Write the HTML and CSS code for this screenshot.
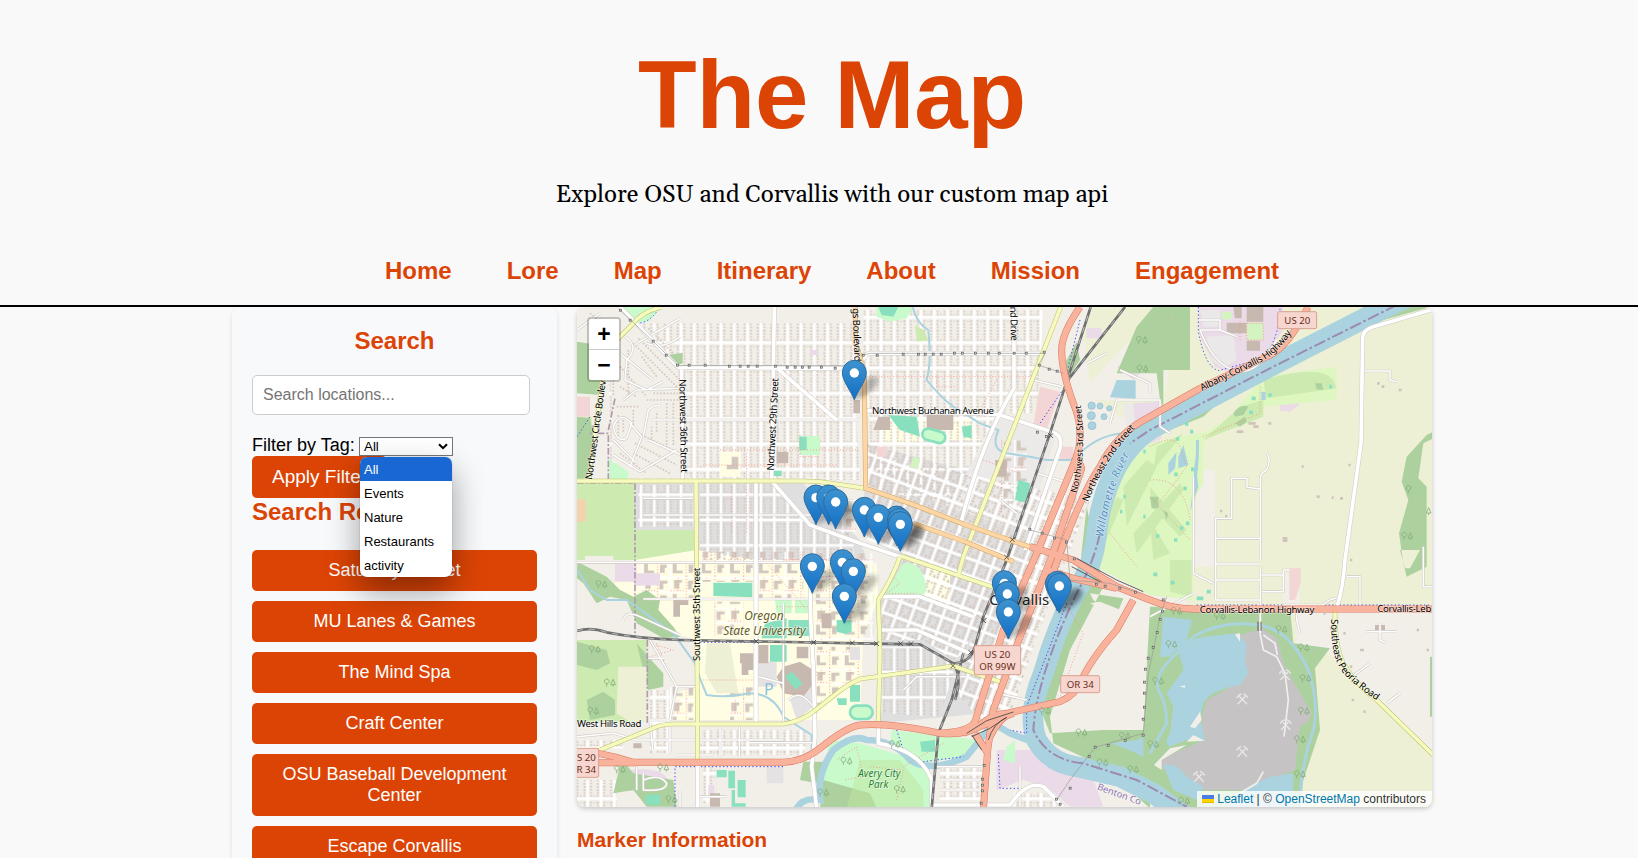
FILE: index.html
```html
<!DOCTYPE html>
<html lang="en">
<head>
<meta charset="utf-8">
<title>The Map</title>
<link rel="stylesheet" href="styles.css">
</head>
<body>
<div class="page">
<header class="header">
  <h1 class="title">The Map</h1>
  <p class="tagline">Explore OSU and Corvallis with our custom map api</p>
  <nav class="nav"><a>Home</a><a>Lore</a><a>Map</a><a>Itinerary</a><a>About</a><a>Mission</a><a>Engagement</a></nav>
</header>
<main class="container">
  <aside class="sidebar">
    <h2 class="side-title">Search</h2>
    <input class="search" type="text" placeholder="Search locations...">
    <div class="filter">
      <label>Filter by Tag:</label>
      <div class="select"><span>All</span>
        <svg class="chevron" viewBox="0 0 10 7"><path d="M1 1.2 5 5.2 9 1.2"/></svg>
        <ul class="options"><li class="selected">All</li><li>Events</li><li>Nature</li><li>Restaurants</li><li>activity</li></ul>
      </div>
    </div>
    <button class="apply">Apply Filter</button>
    <h2 class="results-title">Search Results</h2>
    <div class="results">
      <button>Saturday Market</button><button>MU Lanes &amp; Games</button><button>The Mind Spa</button><button>Craft Center</button><button>OSU Baseball Development Center</button><button>Escape Corvallis</button>
    </div>
  </aside>
  <section class="content">
    <div class="map">
      <svg class="tiles" viewBox="21 21 2565 1500" preserveAspectRatio="none">
        <defs>
          <pattern id="res" width="40" height="76" patternUnits="userSpaceOnUse" patternTransform="translate(13 52)">
            <path class="bld" d="M7 9h6v5H7zM7 18h5v6H7zM8 28h5v5H8zM7 37h6v6H7zM8 47h5v5H8zM7 56h6v5H7zM8 65h5v5H8zM27 9h6v6h-6zM28 19h5v5h-5zM27 29h6v5h-6zM28 38h5v6h-5zM27 48h6v5h-6zM28 57h5v5h-5zM27 66h6v4h-6zM18 10h4v4h-4zM18 66h4v4h-4z"/>
            <path class="st" d="M0 0V76M0 0H40M0 76H40M40 0V76"/>
          </pattern>
          <pattern id="grid" width="44" height="48" patternUnits="userSpaceOnUse" patternTransform="translate(885 560) rotate(20)">
            <path class="bld" d="M7 7h9v6H7zM7 16h7v5H7zM7 24h9v5H7zM7 32h6v8H7zM20 8h6v5h-6zM29 7h8v6h-8zM31 16h6v7h-6zM29 26h8v5h-8zM31 34h6v7h-6zM20 34h7v7h-7z"/>
            <path class="st" d="M0 0V48M44 0V48M0 0H44M0 48H44"/>
          </pattern>
          <pattern id="campus" width="86" height="92" patternUnits="userSpaceOnUse">
            <path class="bld" d="M10 14h24v9H22v17H10zM54 12h24v8h-8v18H54zM12 58h20v10h-6v14H12zM50 54h12v22h18v8H50z"/>
            <path class="svc" d="M0 5H86M44 5V92M5 48H86"/><path class="foot" d="M5 0V92M44 44H86M66 5V48"/>
          </pattern>
          <marker id="pt" markerUnits="userSpaceOnUse" markerWidth="12" markerHeight="12" refX="6" refY="6"><rect x="2.5" y="2.5" width="6" height="6" fill="#ddd" stroke="#555" stroke-width="2"/></marker>
          <g id="tree"><path d="M0 0v-9a7 7 0 1 1 1 0M19 0v-6h-7l7-16 7 16h-7"/></g>
          <g id="picks"><path d="M-14 15 9-9M14 15-9-9M-17-4Q-12-14-3-16M17-4Q12-14 3-16"/></g>
          <linearGradient id="pinfill" x1="0" y1="0" x2="0" y2="1"><stop offset="0" stop-color="#3e93cf"/><stop offset="1" stop-color="#126fc6"/></linearGradient>
          <filter id="soft" x="-50%" y="-50%" width="200%" height="200%"><feGaussianBlur stdDeviation="7"/></filter>
          <g id="pin">
            <path class="pin-shadow" d="M0 0C0-20 20-65 50-70S75-50 55-30 20-8 0 0"/>
            <path class="pin-body" d="M0 0C-9-26-36-57-36-82A36 37 0 0 1 36-82C36-57 9-26 0 0Z"/><circle cx="0" cy="-81" r="14" fill="#fff"/>
          </g>
          <g id="trunk">
            <path d="M85 1360Q140 1370 190 1387L640 1387Q700 1385 750 1345Q830 1280 870 1275Q960 1268 1110 1300Q1190 1308 1230 1275T1310 1240L1470 1205Q1515 1185 1530 1150Q1560 1080 1640 990L1690 900"/>
            <path d="M85 1388H200M1530 21Q1475 100 1475 150Q1475 215 1510 310Q1545 390 1520 470L1400 760L1300 990L1215 1265Q1200 1295 1110 1300"/>
            <path d="M1521 470L1535 505L1445 770L1350 1010L1270 1230L1253 1350L1240 1530M1520 460L1530 530"/>
            <path d="M2214 21Q2150 150 2090 170L1890 265L1740 350Q1640 400 1590 500Q1540 570 1470 760L1440 840"/>
            <path d="M1380 740L1510 780L1640 860L1740 900Q1800 925 1870 927H2590M1430 810L1510 835L1640 865M1215 1300L1250 1355M1180 1300L1330 1240M1260 1310Q1290 1250 1330 1235"/>
          </g>
          <g id="orange"><path d="M856 21V130Q880 190 883 240L887 565L1020 610L1180 672L1400 748M1030 670L1180 723L1330 785"/></g>
          <g id="yellow">
            <path d="M21 543H700Q750 543 800 552L890 566M378 545L383 1380M1472 21L1180 770L1165 825M275 21Q215 35 185 75L110 150Q85 330 55 545"/>
            <path d="M85 1352L255 1282Q280 1272 310 1272H640Q690 1265 730 1235L800 1180Q830 1155 870 1137L1150 1098L1290 1145M990 770Q970 830 925 900L930 1060L925 1265M990 767L1270 862M2295 932Q2294 1040 2320 1090Q2350 1145 2420 1200L2590 1365"/>
          </g>
          <g id="major">
            <path d="M140 10L325 202L870 206M335 200L338 535M613 21L605 543L720 675L870 730L990 770M558 545V1265M1332 21V265Q1230 430 1165 700M870 195Q885 160 900 160H1425M885 332L1230 340L1290 345L1445 395Q1480 405 1470 445L1365 750M622 205L800 360M725 780Q715 890 730 1100L735 1310L725 1400L740 1525M383 1390V1525M925 1280V1330Q1050 1350 1085 1440V1525M930 890H1050L1210 950M930 990H1040L1200 1060"/>
            <path d="M2582 30L2410 80Q2380 90 2378 110L2373 430L2325 780Q2320 860 2300 925M1090 1515H1320Q1370 1440 1420 1460L1480 1520"/>
          </g>
          <g id="minor">
            <path d="M2071 780V535Q2070 520 2090 510Q2105 480 2090 460M2070 567L2031 562V535H1985V655H1937V900M1937 715H2070M1937 792H2070M1937 840H2070M1937 900H2070M2378 213H2460V240L2480 245M2071 800V1000M2075 825H2140V810H2160M2075 875H2140V810M2140 915H2260Q2280 895 2300 895M2330 830H2370V915M2180 915V960L2190 1000M2390 995H2480M2430 970V1020L2450 1030M2560 740V860H2590M2352 1125L2400 1090M2450 1210L2490 1180"/>
            <path d="M1885 60H1950V90L2000 110M1950 90H1890Q1930 190 1990 210T2100 150L2120 120M1740 950L1870 880M1870 530V820L1930 850M220 897H870M640 910V1270M21 787H730M240 1020L320 1160L380 1160M240 1260H300L320 1160M235 1075H285M21 1310L130 1300L200 1320H640M240 1270L250 1360M300 1270V1360M450 1275V1370M508 1275V1370M320 1365H430M540 1328H735M200 1390V1470M390 1490H470M330 1520V1470M160 960Q170 930 210 950L330 1005M220 1440Q270 1420 290 1450Q290 1475 220 1470V1420"/>
            <path d="M165 110Q210 140 170 180L165 240L230 270L280 245M130 380Q150 330 185 370L170 415Q140 430 130 380M220 410L235 330Q260 310 270 320M130 465L210 515L320 450M200 490L130 420M235 420L335 465M200 130L330 55M230 130Q280 150 330 110M60 50L110 90M21 90L90 40M160 300L200 270L330 265M150 160L250 240M180 500L215 410L180 370M245 360H870M220 595H370M220 645H870"/>
            <path d="M1550 190L1610 160M1620 370L1640 300L1770 300V380L1800 400M1400 520L1500 550M1290 600L1340 640M1390 240L1475 260M1650 210L1740 250 1740 280M640 1150L565 1130M655 1200Q700 1160 740 1240M1100 1400H1240M1110 1440H1230M1110 1470H1230M1350 1520V1400M1000 1170L1040 1130L1190 1130M1280 1180L1370 1200"/>
          </g>
          <g id="rail"><path d="M21 993Q60 980 110 997Q200 1015 330 1020L870 1030L1050 1033Q1090 1055 1150 1090Q1200 1090 1215 1040L1240 950L1310 780L1440 400L1490 245L1562 21M1490 245L1665 21M1180 1060L1145 1200L1105 1300L1085 1525M1145 1090Q1180 1120 1155 1200"/></g>
        </defs>
        <rect width="2600" height="1530" fill="#f2efe9"/>
        <!-- land use -->
        <path fill="#e0dfdf" d="M195 550H372V690H195zM385 550H700L870 720L890 780H385zM885 430L1380 560L1400 760L1240 1240L930 1270L925 900L985 770L880 700z"/>
        <path fill="#eef0d5" d="M1560 21H2590V1525H2200L1850 925V500L1740 400L1600 320L1500 240z"/>
        <path fill="#eceae8" d="M1290 345L1460 400L1370 700L1130 620zM1660 310H1770V440L1690 550z"/>
        <path fill="#f2efe9" d="M1540 90L1490 240L1560 300L1780 300L1800 200L1700 100L1560 250zM1885 510H1935V800H1870zM1560 810L1690 870L1660 960L1560 1080L1450 1240L1500 1290L1700 1260L1730 900zM2180 915H2590V1360L2330 1120L2270 1060L2180 1030zM2140 805L2190 880V920H2140z"/>
        <path fill="#cdebb0" d="M21 550H193L197 690H372V780H21zM21 1020H230V1265H21zM21 350H65V545H21z"/>
        <path fill="#f2efe9" d="M45 768H130V782H45z"/><path fill="#f2d3ae" d="M21 598H47V665H21z"/>
        <path fill="#fffee5" d="M135 790L380 750L560 780H870L920 790L925 900L880 1000L870 1260L640 1260H310L310 1180L385 1160L380 1020L310 1000L190 890L135 860zM930 350H1200L1230 420H1100L940 435zM1070 800L1140 825V920L1060 890z"/>
        <path fill="url(#res)" d="M115 70H860V370L870 540H120zM880 30H1420L1400 340H880zM900 340H1280L1140 620L890 560zM390 550H620L720 680L850 730V780H390zM245 555H370V680H205V555z"/>
        <path fill="#f2efe9" d="M125 300H335V535H180L125 475zM115 70H190L325 205V300H125z"/>
        <path class="specks" d="M190 130L325 265M205 115L330 240M235 85L320 170M60 40L110 80M150 200L230 290M175 150V300M190 330V380M145 345V410M160 350V400M205 400L330 460M195 430L320 495M190 460L300 520M150 460L230 520M260 340V400M290 310V440M310 310V440M245 380V420M230 300H330M140 320H210M130 150V290M150 260L200 290M215 170L260 230M250 280H325"/>
        <path fill="#fffee5" d="M450 455H512V530H450z"/><path fill="#d3c8c0" d="M485 470H505V508H470V495H485z"/>
        <path fill="url(#grid)" d="M890 430L1180 520L1560 600L1400 1010L1330 1220L1240 1270L1160 1180L1220 950L990 870L1000 760L890 720z"/>
        <path fill="url(#grid)" d="M935 900L1060 885L1240 930L1180 1060L1150 1080L1060 1020H935z"/>
        <path fill="url(#res)" d="M935 1040H1060L1140 1090L1150 1120L1110 1250L935 1240z"/>
        <path fill="url(#res)" d="M240 1170H300V1360H240zM390 1290H720L700 1365H390zM400 1395H440V1510H400zM1110 1400H1250V1500H1110zM1330 1480H1460V1520H1330zM21 1320H160V1345H21zM21 1440H140V1520H21z"/>
        <path fill="url(#campus)" d="M395 755H550V845H395zM565 755H700V900H565zM735 760H910V1020H735zM300 1160H370V1260H300zM480 1160H550V1260H480zM740 1040H870V1130L740 1230zM210 790H370V900H210zM800 600H860V720L800 690zM1290 420H1370V560L1290 640zM430 905H520V1010H430z"/>
        <path fill="#e4e2e2" d="M565 1085H620V1160H565zM660 1200L730 1150V1220L680 1260zM840 1040H870V1080H840zM590 1400H640V1450H590z"/>
        <path fill="#ebdbe8" d="M135 790H200V820H270V856L195 857L190 845H135zM155 1415Q280 1390 300 1450Q300 1490 260 1480L155 1470zM1690 310L1775 305V415L1700 450zM1640 200L1740 150V190L1690 240zM1550 84H1595V115H1550zM2130 305L2187 300V315L2160 335L2130 332zM1885 21H2140V90L2100 150L1980 220L1935 200L1890 110zM1380 1350L1560 1410L1600 1520H1500L1430 1460L1360 1440L1280 1470V1350zM415 1455H433V1485H415zM720 150H745V165H720z"/>
        <path fill="#eae8e9" d="M1892 30H1950V80H1900zM1910 110L1990 105L2000 180L1960 205L1930 185z"/>
        <path fill="#c8facc" d="M150 21H275L235 65L190 70L175 55zM685 408H750V465H690zM918 21H1030L1010 55L960 65L920 50zM115 475L175 515V540H120zM1000 790Q1060 780 1070 870L1060 885H945zM965 1290L1230 1320L1180 1370L1050 1390L960 1340zM780 1320L870 1330L1040 1380L1090 1450V1525H800L750 1460zM1310 1340L1335 1320V1390L1300 1380zM615 900H665V940H620zM675 900H720V940H675z"/>
        <path fill="#add19e" d="M21 125L85 135L95 285L21 280zM295 165L338 158V190L320 198zM21 350L60 355L70 400L50 535H21zM22 785L110 830L150 870L190 890L230 870L270 900L265 930L310 980L330 1010L280 1015L200 970L170 900L120 890L80 910L40 850L21 835zM21 1025L110 1050L120 1090L80 1110L21 1095zM200 1030L235 1070L280 1120V1160L235 1170L220 1110zM50 1200L100 1175L135 1200V1245L60 1260zM160 1170H205V1245L165 1240zM150 1395L170 1395L190 1420L310 1440L320 1520H230L190 1470L130 1480zM700 1385H760V1440L740 1450L690 1440zM760 1440L900 1480L920 1525H750zM1485 190L1520 125L1530 180L1490 240zM1700 80L1750 21H1860V210H1780V320L1770 300L1760 220L1640 220z"/>
        <path fill="#add19e" d="M1750 21H1780L1782 210H1745zM2020 240L2110 195L2260 110L2580 21H2480L2230 140L1980 260L1800 340V390L1900 350zM2590 395L2570 405L2510 470L2495 545L2515 600L2487 700L2500 790L2510 830L2570 800V560L2545 535L2560 430L2590 415zM1550 620L1530 800L1480 960L1400 1200L1440 1300L1600 1290L1720 1290L1740 920H2160L2170 1030L2280 1045L2235 1105L2250 1290L2200 1440L2190 1525H1740L1600 1400L1450 1330L1440 1250L1500 1050L1600 860zM1560 880L1660 895L1640 945L1570 900zM2580 1070h8v180h-8zM2490 750H2550L2520 805H2505z"/>
        <path fill="#f2efe9" d="M1560 910L1590 905L1690 945L1660 960L1630 1020L1590 1060L1545 1170L1450 1210L1445 1260L1600 1290L1710 1290L1725 1200L1735 910L1700 880L1660 960z"/>
        <path fill="#def6c0" d="M1740 430L1910 395L1980 350L2080 230L2300 200V300L2080 320L1960 360L1900 430L1900 550L1870 600L1868 900L1740 885L1540 780L1560 640L1640 520z"/>
        <path fill="#cdebb0" d="M2080 240Q2250 190 2290 240L2300 265L2090 295zM1900 420L2010 320L2080 300V350zM1660 560L1730 480L1760 500L1670 680zM1690 700L1830 550L1840 570L1700 760zM1740 560L1850 690L1830 710L1745 620zM1740 660L1800 760L1750 780zM1800 780H1865V890L1800 875zM1600 660L1640 590L1660 600L1580 790zM1760 440L1840 400L1750 510zM1035 75L1060 90L1075 120L1040 125z"/>
        <path fill="#add19e" d="M1990 340Q2010 310 2035 320L2020 345 1995 350zM1995 370L2025 350 2030 365 2010 380zM1740 590H1765V625H1745zM2235 250H2255L2260 270 2240 268zM1780 630L1795 640 1790 660z"/>
        <path fill="#bfe5a0" d="M870 1380L990 1380L1060 1470V1525H830z" opacity=".5"/>
        <path fill="#eef0d5" d="M2240 1105L2280 1060L2330 1120L2590 1370V1525H2200L2250 1300V1160zM145 1100H230V1265H180L140 1240zM410 1030H480L505 1180H440L405 1120z"/>
        <path fill="#c8b9b0" d="M925 350H960V390H910zM1070 345H1150V390H1070zM1970 68H2030V100H1970zM2030 21H2080V65H2030zM1990 21H2015V55H1995zM2030 122H2070V152H2030zM640 1100L690 1085L730 1110V1150L700 1190L640 1180L620 1130zM510 1060H550V1110H535V1125H515V1090H510zM2415 975H2445V990H2415zM565 1035H595V1090H565zM680 1040H715V1075H680zM620 455H655V490H620zM310 900H355V915H330V950H310zM1275 480H1310V530H1280zM850 300H870V340H850zM755 940H785V985H755zM190 1330H215V1345H190zM420 1480H450V1520H420z"/>
        <path fill="#88e0be" d="M430 848H547V892L430 888zM585 970L650 955V1015H575zM655 960H722V1008H655zM600 1035H650V1085H600zM645 1130L665 1115L698 1150L678 1170zM440 1410H470V1432H440zM475 1412H495V1465H475zM503 1440H527V1492H503zM228 1484H270V1514H228zM485 1470H495V1510H527V1520H485zM840 1155H870V1205H840zM800 960H845V995L825 1002L800 995zM955 345L1040 350L1050 410L990 390zM1175 380L1205 375V415L1180 410zM1345 540L1380 550L1375 610L1335 600zM1050 1325L1095 1320V1355H1055zM925 21H985L970 50L935 45zM610 512H635V528H610zM688 410H710V450H688zM800 1195H830V1215H805z"/>
        <rect class="track" x="1057" y="390" width="70" height="34" rx="17" transform="rotate(15 1090 405)"/><rect class="track" x="840" y="1217" width="68" height="40" rx="20"/>
        <path fill="#d3f3c0" d="M1030 470L1050 475L1045 508L1020 500zM1955 35H1985V58H1955zM2030 68H2080V120H2030z"/>
        <path fill="#f2d5d4" d="M1410 260L1470 275L1430 390L1390 375zM1470 440H1510V480H1470zM2158 805H2192V850L2175 900H2158zM920 440H950V470H920zM21 290H60V350H21z"/>
        <path fill="#aad3df" d="M1640 240L1697 241V296L1620 292zM2074 275h13v25h-13zM1795 490l25-35-5 50-20 20zM1825 470l15-35 15 60-30 10zM1780 950L1866 960L1850 1020L1800 1070H1770zM1625 1330L1700 1320L1720 1310V1370L1700 1360zM1875 470L1885 560L1860 635L1870 560z"/>
        <g fill="#aad3df" stroke="#8cbacb" stroke-width="2"><circle cx="1565" cy="317" r="11"/><circle cx="1590" cy="318" r="9"/><circle cx="1564" cy="347" r="12"/><circle cx="1566" cy="377" r="12"/><circle cx="1618" cy="325" r="8"/><circle cx="1602" cy="350" r="9"/></g>
        <!-- quarry -->
        <path fill="#c5c3c3" d="M2010 1005L2075 985L2120 1015L2145 1100L2225 1240L2215 1265L2190 1280L2175 1410L2030 1470H1900L1780 1410L1770 1380L1900 1320L1895 1250L1910 1200L2020 1140z"/>
        <path fill="#aad3df" d="M1820 1030L1900 1010L2005 1000L2030 1035L2025 1080L2035 1120L2010 1155Q1920 1170 1900 1210L1890 1250L1905 1320L1850 1320L1800 1340Q1780 1330 1800 1300L1810 1220L1790 1180L1840 1110zM1780 1395Q1820 1385 1850 1430L1900 1460L1880 1500L1810 1470zM2030 1465L2100 1430L2170 1420V1525H1960z"/>
        <path fill="#f2efe9" d="M1995 1003L2010 1000V1025zM1860 1280L1890 1235 1895 1260 1875 1285zM1850 1325L1870 1305 1880 1310 1905 1322zM1752 1395L1800 1345 1850 1335 1775 1380V1410zM1829 1160L1845 1155V1163zM1740 1480L1790 1500 1800 1525H1740z"/>
        <path class="sketch" d="M2070 1000L2080 1050 2120 1070 2145 1120 2155 1200 2142 1310M2080 1005L2115 1030 2122 1065M2000 1485L2060 1450 2080 1415"/>
        <!-- water -->
        <path class="river" d="M2550-25L2450 21L2100 200L1740 388Q1680 430 1640 500Q1590 600 1580 700Q1570 800 1520 870Q1460 980 1420 1120Q1370 1240 1400 1320Q1440 1390 1520 1400L1650 1430L1750 1480L1860 1560"/>
        <path class="creek wide" d="M680 1525Q700 1490 750 1500Q740 1420 790 1350Q850 1300 890 1320Q970 1320 1020 1380Q1080 1420 1190 1370L1270 1270L1320 1300L1400 1330"/>
        <path class="creek" d="M1028 21Q1040 70 1075 90Q1085 190 1070 240Q1110 290 1150 320L1230 370L1285 390Q1260 450 1310 460L1380 470L1430 480H1500L1540 450Q1600 400 1670 400M21 810L60 870L110 900L170 900L240 950L310 1000L375 1090Q390 1140 410 1185Q470 1195 540 1180Q610 1180 640 1250L725 1305V1360"/>
        <path class="creek mid" d="M1740 1360L1790 1270Q1790 1210 1765 1170Q1750 1130 1800 1080L1870 1010Q1960 960 2060 975Q2150 980 2210 1100Q2250 1200 2230 1290Q2190 1400 2190 1525M1870 570Q1885 490 1882 420"/>
        <path class="boundary" d="M2480 15L2100 205L1740 390L1680 430M1590 700Q1570 790 1520 880Q1400 1130 1390 1290Q1430 1380 1540 1390L1700 1440L1850 1520"/>
        <path class="limit" d="M195 550V1010M232 1020V1270M115 540V400L60 400M115 390L135 295M21 549H190"/>
        <path class="foot" d="M450 450H870M400 495H800M530 460V700M690 405V470H750M640 780H900M620 920H720M880 230H1390M1100 230V260H1160M1280 240L1230 330M1240 480L1350 520M1740 440Q1810 400 1830 440L1850 500 1760 620M1740 540Q1840 530 1860 660M1900 410L2070 340V260M1740 590L1860 720M1620 700L1700 800M1560 800L1680 870M960 820L990 850 950 880 1040 880M1480 900L1540 1000 1470 1190M240 1030L310 1050 240 1070M260 1030L300 1130M870 770V900M740 830H900M400 1140H560M800 1380L860 1340 880 1430 820 1440M900 1400L1000 1410 980 1500M590 790L720 940M1120 1330L1000 1400M485 560V700M650 1180Q740 1190 740 1110M2030 70H2080V120H2030zM2010 120V60"/>
        <path class="bike" d="M315 1520V1400H640M860 1275H980M1885 21V95Q1905 200 1945 212L2080 175Q2130 110 2130 21M1530 60L1485 240M1475 275L1410 370M1880 915H2580M390 1027H560M1490 910L1370 1220V1300L1320 1290M1285 1363L1290 1465H1350M980 1290L1000 1350 1060 1385 1180 1370M21 410L60 350M200 70Q240 70 270 21"/>
        <!-- roads -->
        <use href="#minor" class="minor-c"/><use href="#minor" class="minor-f"/>
        <use href="#major" class="major-c"/><use href="#major" class="major-f"/>
        <use href="#rail" class="rail-c"/><use href="#rail" class="rail-f"/>
        <use href="#yellow" class="yellow-c"/><use href="#yellow" class="yellow-f"/>
        <use href="#orange" class="orange-c"/><use href="#orange" class="orange-f"/>
        <use href="#trunk" class="trunk-c"/><use href="#trunk" class="trunk-f"/>
        <path class="bridge" d="M1190 1300L1250 1262 1330 1236M1205 1310Q1260 1290 1310 1252M1255 1320Q1270 1270 1310 1252M1520 775L1640 840L1720 875M1505 800L1590 845M2064 965v28M2073 965v28M1205 1305L1235 1350"/>
        <path class="power" d="M152 31L325 197H870M880 166L900 160H1425L1405 195 1480 220M1380 690L1490 720 1500 840 1620 850 1710 880M1790 890L1770 950 1750 1050 1735 1120 1728 1200 1720 1300 1575 1342 1500 1440 1460 1500"/>
        <path class="power-pts" d="M152 31L181 61L250 124L289 166L323 196L358 196L406 196L479 199L511 199L535 199L562 199L617 199L652 202L676 202L698 202L718 202L755 202L796 205"/>
        <path class="power-pts" d="M880 166L922 166L1000 163L1046 163L1066 163L1090 163L1114 163L1154 160L1178 160L1217 160L1256 160L1288 160L1333 160L1369 160L1423 157L1408 196L1438 208L1462 214"/>
        <path class="power-pts" d="M1403 397L1430 410L1380 688L1417 700L1454 715L1490 727L1514 777L1580 853L1606 859L1650 865L1697 877"/>
        <path class="power-pts" d="M1780 900L1778 934L1771 959L1762 998L1750 1043L1735 1075L1727 1108L1724 1147L1724 1180L1724 1222L1720 1258L1720 1306L1666 1322L1615 1337L1576 1342L1558 1370L1501 1465L1460 1498L1471 1513"/>
        <path class="power-pts" d="M1243 1397L1238 1438L1238 1456L1238 1473L1234 1510"/>
        <path class="crosses" d="M552 1017l14 14m0-14-14 14M724 1020l14 14m0-14-14 14M840 1022l14 14m0-14-14 14M913 1024l14 14m0-14-14 14M985 1024l14 14m0-14-14 14M1016 1024l14 14m0-14-14 14M1142 1090l14 14m0-14-14 14M1195 1050l14 14m0-14-14 14M1234 955l14 14m0-14-14 14M1303 765l14 14m0-14-14 14M1320 712l14 14m0-14-14 14M1435 400l14 14m0-14-14 14"/>
        <g class="trees">
          <use href="#tree" x="1706" y="132"/><use href="#tree" x="1708" y="218"/><use href="#tree" x="65" y="1060"/><use href="#tree" x="110" y="1160"/><use href="#tree" x="60" y="1245"/><use href="#tree" x="85" y="865"/><use href="#tree" x="140" y="1420"/><use href="#tree" x="270" y="1415"/><use href="#tree" x="295" y="1510"/><use href="#tree" x="820" y="1395"/><use href="#tree" x="750" y="1490"/><use href="#tree" x="1415" y="1245"/><use href="#tree" x="1525" y="1310"/><use href="#tree" x="1655" y="1320"/><use href="#tree" x="1588" y="1400"/><use href="#tree" x="1680" y="1420"/><use href="#tree" x="1810" y="945"/><use href="#tree" x="1940" y="960"/><use href="#tree" x="1795" y="1045"/><use href="#tree" x="1755" y="1155"/><use href="#tree" x="2125" y="1000"/><use href="#tree" x="2192" y="1055"/><use href="#tree" x="2197" y="1147"/><use href="#tree" x="2192" y="1245"/><use href="#tree" x="2180" y="1330"/><use href="#tree" x="2180" y="1435"/><use href="#tree" x="1740" y="1345"/><use href="#tree" x="1833" y="1515"/><use href="#tree" x="2502" y="720"/><use href="#tree" x="965" y="1345"/><use href="#tree" x="980" y="1480"/>
          <path d="M2515 580v-9a7 7 0 1 1 1 0M2576 645v-6h-7l7-16 7 16h-7"/>
        </g>
        <g class="picks"><use href="#picks" x="2145" y="1125"/><use href="#picks" x="2017" y="1198"/><use href="#picks" x="2147" y="1275"/><use href="#picks" x="2017" y="1355"/><use href="#picks" x="1887" y="1430"/></g>
        <path class="dots" d="M2421 250h8M2435 260h8M2486 270h9M2335 495h7M2195 500h6M2240 590h9M2285 593h6M2310 595h9M2138 715h14M2138 722h14M1950 633h7M1965 648h7M1805 53h5M2320 1000h7M2300 1060h9M2340 1100h7M2280 985h7M2570 1050h7M2540 990h7M2340 780h7M2345 1200h7M2380 1235h7M2035 370h22M2050 380h16M2095 370h9M2000 395h20M2260 940h7M2370 1050h12"/>
        <path class="ponds" d="M2045 295h12M2037 337h12M2095 285h10M2278 260h8M1845 372h10M1860 395h10M1818 417h10M1813 523h10M1863 508h10M1830 684h10M1848 670h10M1840 565h10M1812 720h10M1758 708h10M1750 823h12M1802 848h12M1880 895h20M1910 875h12M1645 520h7M1660 590h7M1650 635h7M1720 650h7M1720 455h7"/>
        <!-- labels -->
        <g class="lbl">
          <text transform="translate(66 540) rotate(-82)" textLength="300">Northwest Circle Boulev</text>
          <text transform="translate(328 238) rotate(89)" textLength="280">Northwest 36th Street</text>
          <text transform="translate(611 512) rotate(-87)" textLength="278">Northwest 29th Street</text>
          <text transform="translate(848 25) rotate(88)" textLength="160">gs Boulevard</text>
          <text transform="translate(1320 20) rotate(88)" textLength="103">nd Drive</text>
          <text x="906" y="341" textLength="366">Northwest Buchanan Avenue</text>
          <text transform="translate(391 1083) rotate(-90)" textLength="280">Southwest 35th Street</text>
          <text x="21" y="1282" textLength="193">West Hills Road</text>
          <path id="p3" d="M1520 580Q1553 450 1530 300L1526 270" fill="none"/><text class="tight"><textPath href="#p3">Northwest 3rd Street</textPath></text>
          <path id="p2" d="M1555 607Q1600 480 1710 370" fill="none"/><text textLength="265"><textPath href="#p2">Northeast 2nd Street</textPath></text>
          <path id="pa" d="M1896 273L2060 192Q2125 165 2180 75" fill="none"/><text textLength="325"><textPath href="#pa">Albany-Corvallis Highway</textPath></text>
          <text x="1889" y="938" textLength="344">Corvallis-Lebanon Highway</text><text x="2422" y="935" textLength="162">Corvallis-Leb</text>
          <path id="ps" d="M2284 957Q2280 1070 2320 1120Q2350 1155 2450 1222" fill="none"/><text textLength="300"><textPath href="#ps">Southeast Peoria Road</textPath></text>
        </g>
        <g class="water-lbl"><path id="pw" d="M1600 712Q1618 570 1690 440" fill="none"/><text textLength="262"><textPath href="#pw">Willamette River</textPath></text><text class="county" transform="translate(1580 1468) rotate(20)">Benton Co</text></g>
        <g class="place"><text x="582" y="961" text-anchor="middle" textLength="118" lengthAdjust="spacingAndGlyphs">Oregon</text><text x="583" y="1004" text-anchor="middle" textLength="247" lengthAdjust="spacingAndGlyphs">State University</text></g>
        <g class="park"><text x="928" y="1430" text-anchor="middle" textLength="126" lengthAdjust="spacingAndGlyphs">Avery City</text><text x="925" y="1464" text-anchor="middle" textLength="60" lengthAdjust="spacingAndGlyphs">Park</text></g>
        <text class="parking" x="582" y="1185">P</text>
        <text class="city" x="1258" y="914" textLength="180" lengthAdjust="spacingAndGlyphs">Corvallis</text>
        <g class="shields"><rect x="2123" y="35" width="117" height="51" rx="5"/><rect x="1213" y="1037" width="139" height="87" rx="5"/><rect x="1472" y="1127" width="117" height="51" rx="5"/><rect x="-10" y="1345" width="96" height="87" rx="5"/>
          <text x="2182" y="71">US 20</text><text x="1282" y="1073">US 20</text><text x="1282" y="1109">OR 99W</text><text x="1531" y="1163">OR 34</text><text x="49" y="1383">S 20</text><text x="49" y="1419">R 34</text></g>
        <use href="#pin" x="853" y="300"/><use href="#pin" x="738" y="674"/><use href="#pin" x="776" y="674"/><use href="#pin" x="797" y="687"/><use href="#pin" x="883" y="711"/><use href="#pin" x="980" y="737"/><use href="#pin" x="925" y="733"/><use href="#pin" x="988" y="744"/><use href="#pin" x="991" y="754"/><use href="#pin" x="727" y="880"/><use href="#pin" x="817" y="868"/><use href="#pin" x="850" y="895"/><use href="#pin" x="823" y="970"/><use href="#pin" x="1303" y="931"/><use href="#pin" x="1312" y="963"/><use href="#pin" x="1462" y="933"/><use href="#pin" x="1468" y="939"/><use href="#pin" x="1315" y="1017"/>
      </svg>
      <div class="zoom"><a>+</a><a>−</a></div>
      <div class="attribution"><svg class="flag" viewBox="0 0 12 8"><path fill="#4c7be1" d="M0 0h12v4H0z"/><path fill="#ffd500" d="M0 4h12v3H0z"/><path fill="#e0bc00" d="M0 7h12v1H0z"/></svg> <a>Leaflet</a> | © <a>OpenStreetMap</a> contributors</div>
    </div>
    <h3 class="info-title">Marker Information</h3>
  </section>
</main>
</div>
</body>
</html>
```
FILE: styles.css
```css
* { box-sizing: border-box; }
html, body { margin: 0; height: 858px; overflow: hidden; background: #f9f9f9; }
body { font-family: "Liberation Sans", Arial, sans-serif; color: #000; }
.page { width: 1664px; height: 858px; overflow: hidden; }
.header { height: 307px; border-bottom: 2px solid #000; text-align: center; padding-top: 40px; }
.title { margin: 0; font-size: 96px; line-height: 110px; letter-spacing: -.2px; color: #dc4405; }
.tagline { margin: 28px 0 0; height: 34px; line-height: 34px; font-family: Georgia, Gelasio, "DejaVu Serif Condensed", "DejaVu Serif", serif; font-size: 24px; white-space: nowrap; }
.nav { display: flex; justify-content: center; gap: 55px; margin-top: 45px; font-size: 24px; line-height: 28px; font-weight: bold; color: #dc4405; }
.container { width: 1200px; margin: 0 auto; display: flex; gap: 20px; align-items: flex-start; }
.sidebar { width: 325px; height: 551px; padding: 20px; background: #f8f9fb; border-radius: 8px 8px 0 0; box-shadow: 0 2px 5px rgba(0,0,0,.1); }
.side-title { margin: 0; text-align: center; font-size: 24px; line-height: 28px; color: #dc4405; }
.search { display: block; width: 278px; height: 40px; margin-top: 20px; padding: 0 10px; border: 1px solid #ccc; border-radius: 5px; font: 16px "Liberation Sans", Arial, sans-serif; }
.search::placeholder { color: #757575; }
.filter { display: flex; align-items: center; gap: 5px; height: 21px; margin-top: 20px; font-size: 18px; white-space: nowrap; }
.filter label { width: 102px; }
.select { position: relative; width: 94px; height: 19px; margin-top: 1px; display: flex; align-items: center; justify-content: space-between; padding: 0 4px; border: 1px solid #767676; background: #fff; font-size: 13.333px; }
.chevron { width: 10px; height: 7px; fill: none; stroke: #000; stroke-width: 2; }
.options { position: absolute; z-index: 5; left: 0; top: 19px; width: 92px; margin: 0; padding: 0; list-style: none; background: #fff; border-radius: 7px; overflow: hidden; box-shadow: 0 0 1px rgba(0,0,0,.5), 0 14px 32px rgba(0,0,0,.38); font-size: 13px; line-height: 25px; }
.options li { height: 24px; padding-left: 4px; }
.options .selected { background: #1967d2; color: #fff; }
.apply { display: block; height: 42px; padding: 0 20px; border: 0; border-radius: 5px; background: #dc4405; color: #fff; font: 19px "Liberation Sans", Arial, sans-serif; }
.results-title { margin: 0; font-size: 24px; line-height: 28px; color: #dc4405; }
.results { display: flex; flex-direction: column; gap: 10px; margin-top: 24px; }
.results button { min-height: 41px; padding: 10px 20px; border: 0; border-radius: 5px; background: #dc4405; color: #fff; font: 18px/21px "Liberation Sans", Arial, sans-serif; flex: none; }
.content { width: 855px; }
.map { position: relative; width: 855px; height: 500px; overflow: hidden; border-radius: 8px; box-shadow: 0 2px 5px rgba(0,0,0,.2); }
.tiles { display: block; width: 855px; height: 500px; }
.info-title { margin: 21px 0 0; font-size: 21px; line-height: 24px; color: #dc4405; }
.zoom { position: absolute; left: 10px; top: 10px; border: 2px solid rgba(0,0,0,.2); border-radius: 4px; background-clip: padding-box; }
.zoom a { display: block; width: 30px; height: 30px; background: #fff; text-align: center; font: bold 23px/30px "Liberation Sans", sans-serif; }
.zoom a:first-child { height: 31px; border-bottom: 1px solid #ccc; border-radius: 2px 2px 0 0; }
.zoom a:last-child { border-radius: 0 0 2px 2px; }
.attribution { position: absolute; right: 0; bottom: 0; height: 16px; padding: 0 6px 0 5px; background: rgba(255,255,255,.8); color: #333; font-size: 12px; line-height: 16px; white-space: nowrap; }
.attribution a { color: #0078a8; }
.flag { width: 12px; height: 8px; }
.tiles .bld { fill: #d3c8c0; }
.tiles .st { fill: none; stroke: #fff; stroke-width: 7; }
.tiles .svc { fill: none; stroke: #fff; stroke-width: 5; }
.specks { fill: none; stroke: #d3c8c0; stroke-width: 5; stroke-dasharray: 5 5; }
.foot { fill: none; stroke: #fa8c7e; stroke-width: 2.5; stroke-dasharray: 3 6; }
.bike { fill: none; stroke: #4545ff; stroke-width: 3; stroke-dasharray: 4 7; }
.track { fill: #c8facc; stroke: #88e0be; stroke-width: 8; }
.river { fill: none; stroke: #aad3df; stroke-width: 62; }
.creek { fill: none; stroke: #aad3df; stroke-width: 6; }
.creek.mid { stroke-width: 9; }
.creek.wide { stroke-width: 20; }
.boundary { fill: none; stroke: #9c8ab0; stroke-width: 6; stroke-dasharray: 36 8 8 8; }
.limit { fill: none; stroke: #b19aad; stroke-width: 5; stroke-dasharray: 20 6 6 6; }
.minor-c, .minor-f, .major-c, .major-f, .rail-c, .rail-f, .yellow-c, .yellow-f, .orange-c, .orange-f, .trunk-c, .trunk-f, .bridge, .power { fill: none; stroke-linejoin: round; }
.minor-c { stroke: #cfcac6; stroke-width: 8; }
.minor-f { stroke: #fff; stroke-width: 4.5; }
.major-c { stroke: #cfcac6; stroke-width: 14; }
.major-f { stroke: #fff; stroke-width: 11; }
.rail-c { stroke: #707070; stroke-width: 8; }
.rail-f { stroke: #e6e6e6; stroke-width: 2; stroke-dasharray: 18 18; }
.yellow-c { stroke: #bcc06d; stroke-width: 14; }
.yellow-f { stroke: #f7fabf; stroke-width: 11; }
.orange-c { stroke: #d3a25c; stroke-width: 15; }
.orange-f { stroke: #fcd6a4; stroke-width: 12; }
.trunk-c { stroke: #d9785f; stroke-width: 21; }
.trunk-f { stroke: #f9b29c; stroke-width: 18; }
.bridge { stroke: #444; stroke-width: 2.5; }
.power { stroke: #999; stroke-width: 2; }
.power-pts { fill: none; stroke: none; marker-start: url(#pt); marker-mid: url(#pt); marker-end: url(#pt); }
.crosses { stroke: #444; stroke-width: 2.5; }
.trees { fill: none; stroke: #86ad7c; stroke-width: 2.5; }
.picks { fill: none; stroke: #e9e7e7; stroke-width: 4; }
.sketch { fill: none; stroke: #f2f0ee; stroke-width: 5; }
.dots { stroke: #d0c3bb; stroke-width: 8; }
.ponds { stroke: #88e0be; stroke-width: 11; }
.tiles text { font-family: "Noto Sans", sans-serif; }
.lbl text { font-size: 29px; fill: #000; stroke: rgba(255,255,255,.5); stroke-width: 4; paint-order: stroke; }
.lbl .tight { font-size: 27px; }
.water-lbl text { font-size: 33px; font-style: italic; fill: #5a8fc4; stroke: rgba(255,255,255,.5); stroke-width: 4; paint-order: stroke; }
.water-lbl .county { font-style: normal; fill: #8d6fae; font-size: 28px; }
.place text { font-size: 36px; font-style: italic; fill: #66601f; stroke: rgba(255,255,255,.65); stroke-width: 5; paint-order: stroke; }
.park text { font-size: 31px; font-style: italic; fill: #248028; stroke: rgba(255,255,255,.6); stroke-width: 4; paint-order: stroke; }
.tiles .parking { font-size: 48px; fill: #8bbfe0; }
.tiles .city { font-size: 43px; fill: #222; stroke: rgba(255,255,255,.6); stroke-width: 5; paint-order: stroke; }
.shields rect { fill: #f6d6cf; stroke: #d9a090; stroke-width: 3; }
.shields text { font-size: 29px; fill: #6b2c20; text-anchor: middle; }
.pin-body { fill: url(#pinfill); stroke: #2e6c9e; stroke-width: 3; }
.pin-shadow { fill: rgba(0,0,0,.25); filter: url(#soft); }
```
